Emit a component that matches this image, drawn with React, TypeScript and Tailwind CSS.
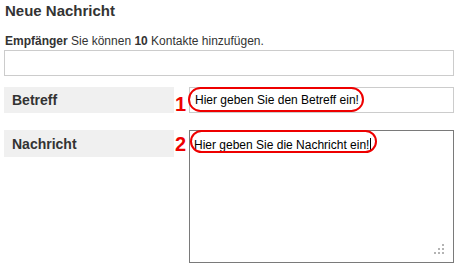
import React from "react"

// Annotated "new message" form: numbered red ovals mark where to type.
function Marker({ n, className }: { n: string; className: string }) {
  return (
    <span
      className={`w-[15px] shrink-0 pl-[1px] text-[20px] leading-[20px] font-bold text-[#ee0000] ${className}`}
    >
      {n}
    </span>
  )
}

function ResizeGrip() {
  return (
    <svg
      aria-hidden
      className="absolute right-[9px] bottom-[8px]"
      width="10"
      height="10"
      viewBox="0 0 10 10"
      fill="#b4b4b4"
    >
      <rect x="8" y="0" width="2" height="2" />
      <rect x="4" y="4" width="2" height="2" />
      <rect x="8" y="4" width="2" height="2" />
      <rect x="0" y="8" width="2" height="2" />
      <rect x="4" y="8" width="2" height="2" />
      <rect x="8" y="8" width="2" height="2" />
    </svg>
  )
}

export default function App() {
  return (
    <div className="h-[265px] w-[457px] overflow-hidden bg-white pl-[4px] font-['Liberation_Sans',Arial,sans-serif] text-[#333]">
      <h1 className="pt-[2px] pl-[1px] text-[15px] leading-[18px] font-bold">
        Neue Nachricht
      </h1>

      <p className="mt-[14px] pl-[1px] text-[12px] leading-[14px]">
        <b>Empfänger</b> Sie können <b>10</b> Kontakte hinzufügen.
      </p>
      <div className="mt-[2px] h-[26px] w-[450px] border border-[#cccccc] bg-white" />

      <div className="mt-[11px] flex items-start">
        <div className="flex h-[26px] w-[170px] shrink-0 items-center bg-[#f0f0f0] pl-[8px] text-[14px] leading-[16px] font-bold">
          Betreff
        </div>
        <Marker n="1" className="mt-[7px]" />
        <div className="relative flex h-[26px] w-[265px] items-center border border-[#cccccc] pl-[5px] text-[12px] leading-[14px] text-black">
          Hier geben Sie den Betreff ein!
          <span className="absolute top-[-1px] left-[-2px] h-[25px] w-[176px] rounded-full border-2 border-[#ee0000]" />
        </div>
      </div>

      <div className="mt-[16px] flex items-start">
        <div className="flex h-[27px] w-[170px] shrink-0 items-center bg-[#f0f0f0] pl-[8px] text-[14px] leading-[16px] font-bold">
          Nachricht
        </div>
        <Marker n="2" className="mt-[4px]" />
        <div className="relative h-[133px] w-[265px] border border-[#7a7a7a] pt-[5px] pl-[4px] text-[12px] leading-[14px] text-black">
          <span>Hier geben Sie die Nachricht ein!</span>
          <span className="ml-[1px] inline-block h-[13px] w-px translate-y-[2px] bg-black align-baseline" />
          <span className="absolute top-[-1px] left-[0px] h-[23px] w-[187px] rounded-full border-2 border-[#ee0000]" />
          <ResizeGrip />
        </div>
      </div>
    </div>
  )
}
